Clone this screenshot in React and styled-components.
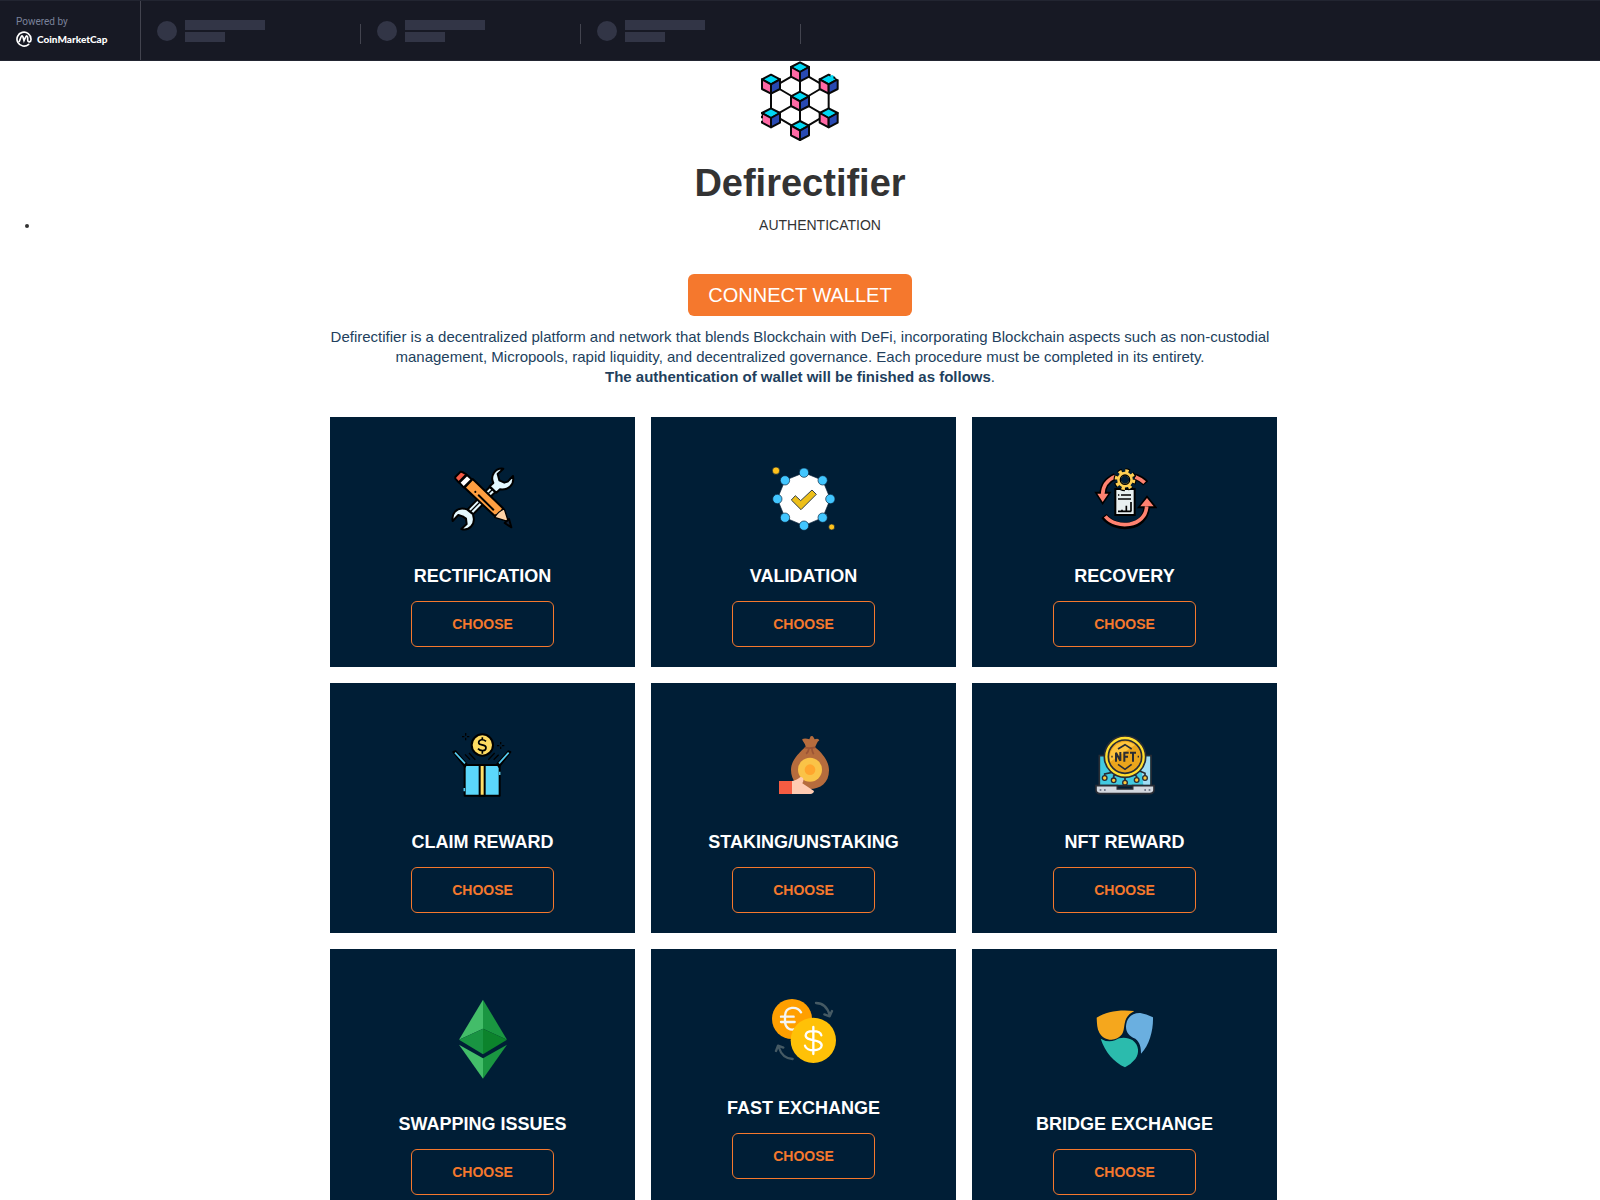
import React from "react";
import styled, { createGlobalStyle } from "styled-components";

const GlobalStyle = createGlobalStyle`
  * { box-sizing: border-box; }
  body {
    margin: 0;
    background: #fff;
    color: #333;
    font-family: "Liberation Sans", Arial, sans-serif;
    font-size: 14px;
    line-height: 20px;
  }
`;

const Ticker = styled.header`
  display: flex;
  height: 61px;
  background: #171924;
  border-top: 1px solid #222531;
  border-bottom: 1px solid #222531;
`;

const PoweredBy = styled.a`
  display: flex;
  flex-direction: column;
  gap: 1px;
  width: 141px;
  padding: 14px 0 0 16px;
  border-right: 1px solid #43444f;
  color: #7a829a;
  font-family: Roboto, sans-serif;
  font-size: 10px;
  line-height: 14px;
  text-decoration: none;
`;

const Brand = styled.span`
  display: flex;
  align-items: center;
  gap: 5px;
  height: 18px;
  color: #fff;
  font-family: Lato, sans-serif;
  font-size: 10px;
  font-weight: 900;
`;

const Quote = styled.div`
  display: flex;
  align-items: center;
  gap: 8px;
  width: 220px;
  padding-left: 16px;
`;

const Coin = styled.span`
  width: 20px;
  height: 20px;
  border-radius: 50%;
  background: #323546;
`;

const Lines = styled.span`
  display: flex;
  flex: 1;
  flex-direction: column;
  gap: 2px;
`;

const Line = styled.span`
  width: ${(p) => (p.$short ? 40 : 80)}px;
  height: 10px;
  background: #323546;
`;

const Divider = styled.span`
  width: 1px;
  height: 20px;
  margin-top: 6px;
  background: #43444f;
`;

const Page = styled.main`
  text-align: center;
`;

const Logo = styled.svg`
  display: block;
  width: 80px;
  height: 80px;
  margin: 0 auto;
`;

const Title = styled.h1`
  margin: 21px 0 11px;
  font-size: 38px;
  line-height: 42px;
`;

const Menu = styled.ul`
  margin: 0 0 39px;
  padding: 0 0 0 40px;
`;

const Container = styled.div`
  max-width: 970px;
  margin: 0 auto;
  padding: 0 15px;
`;

const ConnectButton = styled.button`
  height: 42px;
  padding: 0 20px;
  border: 0;
  border-radius: 6px;
  background: #f5782d;
  color: #fff;
  font: 20px "Liberation Sans", Arial, sans-serif;
  vertical-align: top;
  cursor: pointer;
`;

const Intro = styled.p`
  margin: 11px 0 30px;
  color: #223f5d;
  font-size: 15px;
`;

const Cards = styled.div`
  display: grid;
  grid-template-columns: repeat(3, 1fr);
  gap: 16px;
  margin-right: -7px;
`;

const Card = styled.section`
  padding: 50px 20px 20px;
  background: #001e36;
`;

const Icon = styled.svg`
  display: block;
  width: ${(p) => (p.$large ? 80 : 64)}px;
  height: ${(p) => (p.$large ? 80 : 64)}px;
  margin: 0 auto;
`;

const CardTitle = styled.h2`
  margin: 35px 0 15px;
  color: #fff;
  font-size: 18px;
  line-height: 20px;
`;

const ChooseButton = styled.button`
  height: 46px;
  padding: 0 40px;
  border: 1px solid #f5782d;
  border-radius: 6px;
  background: transparent;
  color: #f5782d;
  font: bold 14px "Liberation Sans", Arial, sans-serif;
  vertical-align: top;
  cursor: pointer;
`;

const CUBES = [[360, 65], [273, 102], [446, 102], [360, 153], [273, 203], [446, 203], [360, 241]];

function BlockchainLogo() {
  return (
    <Logo viewBox="240 33 240 240" aria-hidden="true" stroke="#080808" strokeLinejoin="round">
      <path fill="none" strokeWidth="6" d="M360 65L273 115V190L360 241L446 190V115L360 65V241M273 102L360 153L446 102M273 203L360 153L446 203" />
      {CUBES.map(([x, y]) => (
        <g key={`${x}-${y}`} transform={`translate(${x} ${y})`} strokeWidth="6">
          <path fill="#00d8f4" d="M0-28L27-14L0 1L-27-14Z" />
          <path fill="#ff69a5" d="M-27-14L0 1V29L-27 15Z" />
          <path fill="#2849b2" d="M27-14L0 1V29L27 15Z" />
        </g>
      ))}
      <path stroke="#fff" strokeWidth="7" fill="none" d="M453 74L458 77M467 81L478 86M242 193V197M244 205V212" />
      <circle cx="456" cy="80" r="5" fill="#00d8f4" stroke="none" />
    </Logo>
  );
}

function RectificationIcon() {
  return (
    <Icon viewBox="33 36 192 192" aria-hidden="true" stroke="#000" strokeWidth="6" strokeLinejoin="round" strokeLinecap="round">
      <g fill="#e4f8ff">
        <path d="M83 163L149 96L166 111L99 178Z" />
        <path d="M90 171L158 103" strokeWidth="4" />
        <path d="M149 94L160 84C150 64 164 38 190 41L173 57L178 76L193 83L203 80L219 63C224 89 206 106 180 103L169 113Z" />
        <path d="M82 164L73 161C49 157 34 176 38 198L55 180L68 184L78 191L80 207L64 222C87 229 107 208 100 184L99 178Z" />
      </g>
      <path fill="#ff9e40" d="M74 98L98 72L189 160C184 177 170 182 162 181Z" />
      <path fill="#ffd2a5" d="M164 187C172 174 180 167 193 162L205 200Z" strokeWidth="4" />
      <path fill="#142238" d="M194 204L207 192L214 217Z" />
      <path fill="#f55b46" d="M46 66L62 50Q67 49 79 58L56 82L46 71Z" />
      <path fill="#fff" d="M58 83L81 60L95 73L71 97Z" />
      <path fill="none" d="M106 110V111M116 121L160 164" strokeWidth="6" />
    </Icon>
  );
}

const NODES = [[132, 53], [188, 76], [211, 132], [188, 188], [132, 212], [75, 188], [52, 132], [75, 76]];

function ValidationIcon() {
  return (
    <Icon viewBox="36 36 192 192" aria-hidden="true" stroke="#082139" strokeWidth="2">
      <polygon fill="#fff" points={NODES.map((n) => n.join(",")).join(" ")} />
      {NODES.map(([x, y]) => <circle key={`${x}-${y}`} cx={x} cy={y} r="14" fill="#42c6ff" />)}
      <path fill="#edbf19" stroke="#333f46" strokeWidth="3" d="M94 135L106 122L122 137L156 105L169 118L123 164Z" />
      <circle cx="48" cy="47" r="11" fill="#ffc21c" />
      <circle cx="215" cy="216" r="9" fill="#ffc21c" />
    </Icon>
  );
}

function RecoveryIcon() {
  return (
    <Icon viewBox="39 36 192 192" aria-hidden="true" fill="none">
      <g stroke="#000" strokeWidth="20">
        <path d="M106 64Q69 80 68 118M164 65Q186 72 197 85M72 183C105 228 198 224 200 154" />
        <path fill="#ff8270" strokeWidth="9" d="M51 115H86L68 142ZM180 155H223L201 128Z" />
      </g>
      <g stroke="#ff8270" strokeWidth="11">
        <path d="M106 64Q69 80 68 118M166 66Q184 73 194 83M76 184C108 224 197 217 200 154" />
        <path fill="#ff8270" stroke="none" d="M52 116H85L68 141ZM181 154H221L201 129Z" />
      </g>
      <path fill="#e8eff0" stroke="#000" strokeWidth="6" d="M106 102H164V180H106Z" />
      <path stroke="#000" strokeWidth="5" d="M114 120H118M123 120H153M114 132H153M114 169H154M126 169V164M139 169V152M153 169V141" />
      <circle cx="135" cy="74" r="29" stroke="#000" strokeWidth="11" strokeDasharray="13 9.8" />
      <circle cx="135" cy="74" r="26" stroke="#ffd053" strokeWidth="10" strokeDasharray="10 10.42" />
      <circle cx="135" cy="74" r="18" stroke="#ffd053" strokeWidth="11" fill="#001e36" />
      <circle cx="135" cy="74" r="14" stroke="#000" strokeWidth="4" />
    </Icon>
  );
}

function ClaimIcon() {
  return (
    <Icon viewBox="36 39 192 192" aria-hidden="true" fill="none" stroke="#000" strokeWidth="6" strokeLinejoin="round">
      <path fill="#5bd7fb" d="M77 135H182V227H77Z" />
      <path fill="#ffdf68" d="M122 135H137V227H122Z" />
      <path d="M43 96L50 94L82 132L78 140ZM214 96L208 94L175 132L180 140Z" />
      <path stroke="#55caef" strokeWidth="5" d="M48 98L78 130M209 98L180 130M76 204V214M182 155V165" />
      <circle cx="130" cy="75" r="32" fill="#ffdc61" />
      <path strokeWidth="5" d="M141 64C134 57 119 57 119 68C119 78 141 71 141 83C141 95 124 94 117 86M130 52V61M130 91V101" />
      <path strokeWidth="4" d="M80 39V47M80 53V61M69 50H76M84 50H91M185 66V73M185 80V87M174 77H181M189 77H196M78 103L93 119M90 99L109 119M179 104L164 119M167 99L148 119" />
    </Icon>
  );
}

function StakingIcon() {
  return (
    <Icon viewBox="36 39 192 192" aria-hidden="true">
      <path fill="#b66c3d" d="M137 80C135 68 126 64 127 57Q136 54 148 58L152 49Q158 46 160 51L164 58Q175 53 178 61C170 67 169 75 165 82C188 100 207 125 207 151C207 190 180 207 150 207C114 207 93 181 93 150C93 122 114 101 137 80Z" />
      <path fill="none" stroke="#9b5435" strokeWidth="5" d="M134 83Q149 86 166 82M147 84Q145 97 138 101M155 84Q157 97 161 103" />
      <circle cx="150" cy="149" r="36" fill="#fac347" />
      <circle cx="150" cy="149" r="16" fill="#ffa52d" />
      <path fill="#ffcbb2" d="M94 184Q113 179 121 171Q132 171 130 183L127 190L162 213Q161 221 151 222H94Z" />
      <path fill="#f65c42" d="M57 183H96V222H57Z" />
    </Icon>
  );
}

function NftIcon() {
  return (
    <Icon viewBox="39 39 192 192" aria-hidden="true" fill="none" stroke="#292c34" strokeWidth="5">
      <path fill="#42cae0" d="M58 107H213V197H58Z" />
      <path fill="#a2def5" stroke="none" d="M180 110H210V194H190Z" />
      <path d="M98 151V157L74 162V174M112 160L101 168V181M135 168V187M158 160L170 169V180M172 150L195 160V174" />
      {[[74, 174], [101, 181], [135, 188], [170, 180], [195, 174]].map(([x, y]) => (
        <circle key={x} cx={x} cy={y} r="7" fill="#ffc83a" strokeWidth="4" />
      ))}
      <path fill="#d3d8df" d="M48 197H112V207H158V197H222V211Q221 220 209 221H60Q49 220 48 211Z" />
      <path stroke="#596076" d="M59 210H64M72 210H77M193 210H198M206 210H211" />
      <circle cx="135" cy="110" r="62" fill="#ffde2e" />
      <circle cx="135" cy="110" r="50" fill="#eba51c" />
      <path fill="#ffc43d" stroke="none" d="M91 125A47 47 0 0 1 165 75Z" />
      <path d="M114 87L135 74L155 87M114 133L135 148L155 133" />
      <path strokeWidth="6" d="M108 125V98L121 122V96M133 125V98H146M133 110H144M150 98H168M159 98V125" />
      <path d="M94 110H98M173 110H177" />
    </Icon>
  );
}

function SwapIcon() {
  return (
    <Icon $large viewBox="9 27 240 240" aria-hidden="true">
      <path fill="#43bd69" d="M129 29L57 149L129 116Z" />
      <path fill="#1a9641" d="M129 29L201 149L129 116Z" />
      <path fill="#199442" d="M129 116V193L57 149Z" />
      <path fill="#0c832c" d="M129 116V193L201 149Z" />
      <path fill="#43bd69" d="M57 164L129 205V266Z" />
      <path fill="#1a9641" d="M201 164L129 205V266Z" />
    </Icon>
  );
}

function FastExchangeIcon() {
  return (
    <Icon viewBox="36 27 192 192" aria-hidden="true" fill="none" strokeLinecap="round" strokeLinejoin="round">
      <circle cx="96" cy="87" r="60" fill="#ff9f00" />
      <path stroke="#f5f5f5" strokeWidth="7" d="M123 67C112 48 76 47 75 78V96C76 115 91 122 106 117M63 80H101M63 96H104" />
      <circle cx="160" cy="151" r="68" fill="#ffc107" />
      <path stroke="#fff" strokeWidth="7" d="M184 136C180 120 138 119 137 136C136 155 184 146 185 166C184 186 139 185 135 167M160 111V192" />
      <path stroke="#455a64" strokeWidth="7" d="M168 39Q198 39 209 75M193 73L209 79L216 63M98 207Q67 206 56 171M48 183L54 167L70 173" />
    </Icon>
  );
}

function BridgeIcon() {
  return (
    <Icon $large viewBox="15 27 240 240" aria-hidden="true">
      <path fill="#f5a71d" d="M50 83C79 64 120 58 163 63C124 83 139 111 126 133C109 157 71 153 58 128C51 116 51 101 50 83Z" />
      <path fill="#6aafe0" d="M219 82C220 120 209 164 183 191C183 173 181 158 166 146C143 138 135 120 139 101C143 80 160 68 181 69Q198 71 219 82Z" />
      <path fill="#2bbbad" d="M62 146Q83 159 105 151C122 140 143 142 158 151C177 165 179 190 166 207Q154 222 135 232C101 215 76 188 62 146Z" />
    </Icon>
  );
}

const SERVICES = [
  ["RECTIFICATION", RectificationIcon],
  ["VALIDATION", ValidationIcon],
  ["RECOVERY", RecoveryIcon],
  ["CLAIM REWARD", ClaimIcon],
  ["STAKING/UNSTAKING", StakingIcon],
  ["NFT REWARD", NftIcon],
  ["SWAPPING ISSUES", SwapIcon],
  ["FAST EXCHANGE", FastExchangeIcon],
  ["BRIDGE EXCHANGE", BridgeIcon],
];

export default function App() {
  return (
    <>
      <GlobalStyle />
      <Ticker>
        <PoweredBy href="#coinmarketcap">
          Powered by
          <Brand>
            <svg width="16" height="16" viewBox="47 92 48 48" fill="none" stroke="#fff" strokeWidth="5" strokeLinecap="round" aria-hidden="true">
              <path d="M85 132A21 21 0 1 1 92 116C93 127 82 127 82 119V112C82 105 78 106 76 110L71 121L68 110C66 105 64 106 62 110L57 123" />
            </svg>
            CoinMarketCap
          </Brand>
        </PoweredBy>
        {[0, 1, 2].map((i) => (
          <Quote key={i}>
            <Coin />
            <Lines>
              <Line />
              <Line $short />
            </Lines>
            <Divider />
          </Quote>
        ))}
      </Ticker>
      <Page>
        <BlockchainLogo />
        <Title>Defirectifier</Title>
        <Menu>
          <li>AUTHENTICATION</li>
        </Menu>
        <Container>
          <ConnectButton type="button">CONNECT WALLET</ConnectButton>
          <Intro>
            Defirectifier is a decentralized platform and network that blends Blockchain with DeFi, incorporating
            Blockchain aspects such as non-custodial management, Micropools, rapid liquidity, and decentralized
            governance. Each procedure must be completed in its entirety.
            <br />
            <strong>The authentication of wallet will be finished as follows</strong>.
          </Intro>
          <Cards>
            {SERVICES.map(([name, Drawing]) => (
              <Card key={name}>
                <Drawing />
                <CardTitle>{name}</CardTitle>
                <ChooseButton type="button" aria-label={`CHOOSE ${name}`}>CHOOSE</ChooseButton>
              </Card>
            ))}
          </Cards>
        </Container>
      </Page>
    </>
  );
}
